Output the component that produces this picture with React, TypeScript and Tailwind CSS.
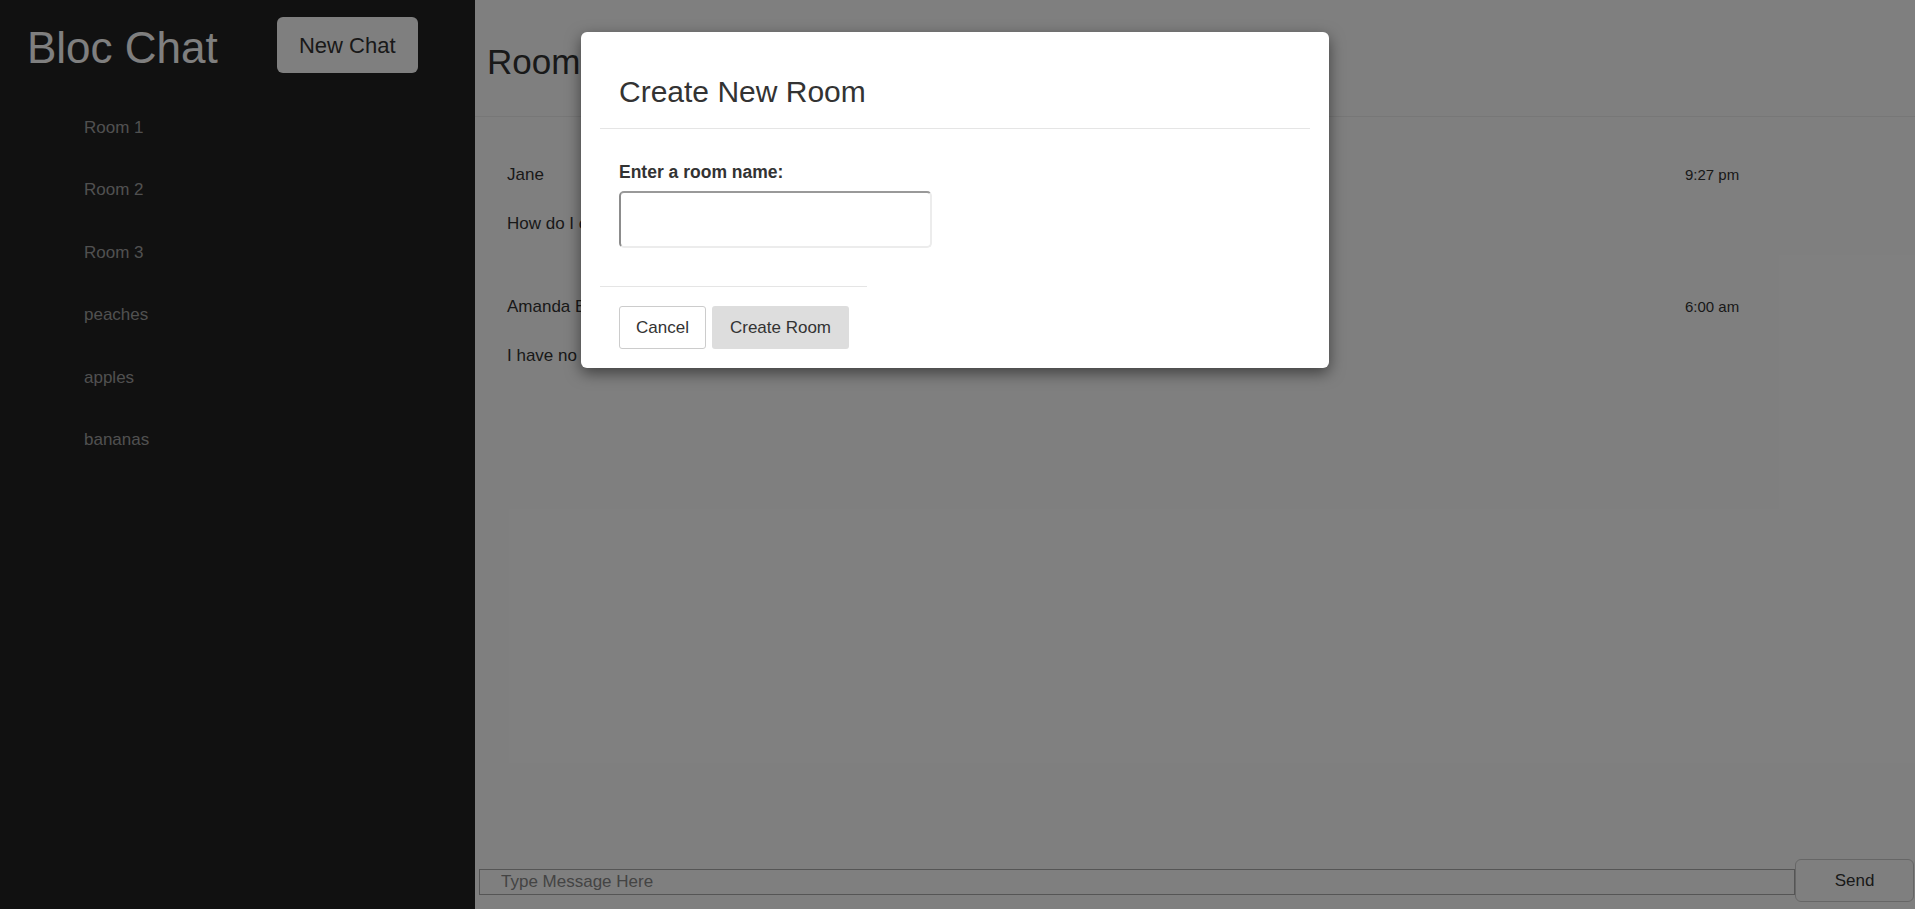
import { useState } from 'react';

const rooms = ['Room 1', 'Room 2', 'Room 3', 'peaches', 'apples', 'bananas'];

const messages = [
  { id: 1, user: 'Jane', text: 'How do I create a new room?', time: '9:27 pm' },
  { id: 2, user: 'Amanda Brown', text: 'I have no idea.', time: '6:00 am' },
];

export default function App() {
  const [roomName, setRoomName] = useState('');
  const [draft, setDraft] = useState('');

  return (
    <div className="relative flex h-[909px] w-full overflow-hidden font-['Liberation_Sans',Arial,sans-serif] text-[#333]">
      {/* Sidebar */}
      <aside className="w-[475px] shrink-0 bg-[#222]">
        <div className="flex items-start pl-[27px] pt-[17px]">
          <h1 className="mt-[9px] text-[44px] leading-[44px] font-normal text-white">Bloc Chat</h1>
          <button className="ml-[59px] h-[56px] w-[141px] rounded-md bg-white text-[22px] text-[#333]">
            New Chat
          </button>
        </div>
        <ul className="mt-[24px] pl-[84px]">
          {rooms.map((room) => (
            <li key={room} className="h-[62.4px] text-[17px] leading-[62.4px] text-[#a0a0a0]">
              {room}
            </li>
          ))}
        </ul>
      </aside>

      {/* Chat */}
      <main className="flex min-w-0 flex-1 flex-col bg-white">
        <div className="h-[117px] border-b border-[#eee] pl-[12px]">
          <h2 className="pt-[42px] text-[35px] leading-[40px] font-normal">Room 1</h2>
        </div>

        <div className="flex-1 pl-[32px] pt-[48px]">
          {messages.map((m) => (
            <div key={m.id} className="mb-[63px]">
              <div className="flex items-baseline">
                <span className="w-[1178px] text-[17px] leading-[20px]">{m.user}</span>
                <span className="text-[15px] leading-[20px] text-[#333]">{m.time}</span>
              </div>
              <p className="mt-[29px] text-[17px] leading-[20px]">{m.text}</p>
            </div>
          ))}
        </div>

        <div className="flex items-end pb-[7px]">
          <input
            value={draft}
            onChange={(e) => setDraft(e.target.value)}
            placeholder="Type Message Here"
            className="mb-[7px] ml-[4px] h-[26px] w-[1316px] border border-[#aaa] pl-[21px] text-[17px] outline-none placeholder:text-[#888]"
          />
          <button className="h-[43px] w-[119px] rounded-md border border-[#ccc] bg-white text-[17px] text-[#333]">
            Send
          </button>
        </div>
      </main>

      {/* Backdrop */}
      <div className="absolute inset-0 bg-black/50" />

      {/* Modal */}
      <div className="absolute top-[32px] left-[581px] w-[748px] rounded-md bg-white shadow-[0_5px_15px_rgba(0,0,0,0.5)]">
        <div className="mx-[19px] border-b border-[#e5e5e5] pt-[44px] pb-[20px] pl-[19px]">
          <h3 className="text-[30px] leading-[32px] font-normal text-[#333]">Create New Room</h3>
        </div>
        <div className="px-[38px] pt-[33px] pb-[38px]">
          <label className="block text-[17.5px] leading-[20px] font-bold text-[#333]">Enter a room name:</label>
          <input
            value={roomName}
            onChange={(e) => setRoomName(e.target.value)}
            className="mt-[9px] block h-[57px] w-[313px] rounded-[5px] border-2 border-t-[#999] border-r-[#ececec] border-b-[#ececec] border-l-[#8c8c8c] px-2 text-[17px] outline-none"
          />
        </div>
        <div className="ml-[19px] w-[267px] border-t border-[#e5e5e5] pt-[19px] pb-[19px] pl-[19px]">
          <div className="flex gap-[6px]">
            <button className="h-[43px] w-[87px] rounded-[3px] border border-[#ccc] bg-white text-[17px] text-[#333]">
              Cancel
            </button>
            <button className="h-[43px] w-[137px] rounded-[3px] bg-[#ddd] text-[17px] text-[#333]">
              Create Room
            </button>
          </div>
        </div>
      </div>
    </div>
  );
}
